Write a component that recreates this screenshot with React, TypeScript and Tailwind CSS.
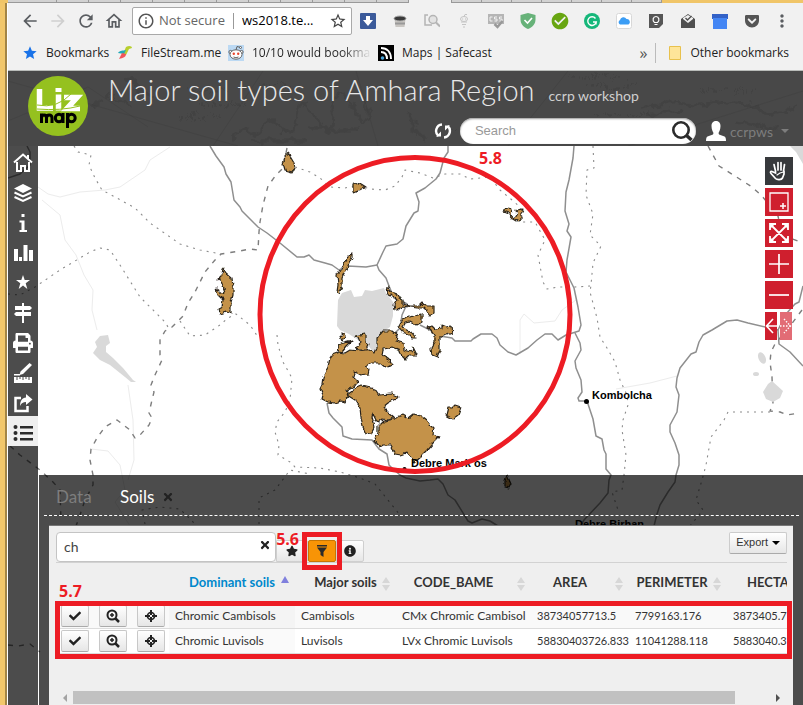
import type { ReactNode } from "react";
import {
  MdArrowBack,
  MdArrowForward,
  MdRefresh,
  MdOutlineHome,
  MdInfoOutline,
  MdStarBorder,
  MdMoreVert,
  MdStar,
  MdCheckCircle,
} from "react-icons/md";
import { FaStar, FaPrint, FaCheck, FaTimes, FaInfoCircle, FaCaretDown, FaReddit, FaGetPocket } from "react-icons/fa";

const ROADS = [
  "M210 146 216 156 224 167 226 174 231 182 234 200 240 207 242 211 258 227 267 233 280 243 297 257 304 257 309 255 314 260 325 263 332 265 339 270 348 266 366 267 377 265",
  "M448 146 448 152 444 158 440 173 436 179 425 188 416 193 419 202 418 211 414 213 406 226 403 239 397 244 386 246 383 252 377 265 379 270 386 278 389 286 394 298 402 301 407 304 402 315 400 328 394 334",
  "M420 325 430 330 440 336 452 338 455 341 471 341 473 339 481 334 492 334 497 338 500 345 508 352 516 355 528 348 537 340 545 334 552 334 558 340 566 335 579 331 581 325 578 307 574 288 566 272 567 260 571 237 567 231 569 224 565 211 566 192 569 180 573 158 574 146",
  "M575 333 580 343 581 350 575 361 576 368 581 380 582 392 578 398 579 401 587 401 593 419 596 436 602 439 604 450 606 454 606 469 611 475 609 480 608 493 600 503 584 520 578 530",
  "M803 286 799 302 795 304 786 314 778 330 748 323 737 320 727 321 712 330 703 335 699 342 696 352 691 354 680 368 677 378 676 387 679 395 677 412 670 425 670 432 675 443 679 455 679 465 676 475 675 482 668 492 660 505 657 514 654 526",
  "M778 330 779 344 790 352 803 366",
  "M327 403 329 413 333 418 342 427 343 436 352 439 372 440 379 449 387 454 389 465 393 469 400 475 406 478 420 481 430 480 438 479 443 484 448 495 455 500 468 521 472 523 482 519 490 521 498 526",
  "M8 178 20 174 30 165 30 152 27 146",
];

const DASHED = [
  "M287 148 283 168 276 175 268 186 263 205 260 222 259 232 258 250 250 249 240 251 221 254 215 260 205 272 200 282 195 292 188 303 183 316 172 327 165 331 160 340 160 355 162 360 155 375 151 385 154 392 152 400 149 413 152 418 149 425 140 435 135 438 130 430 117 420 105 427 97 438 91 449 90 460 93 475 93 485 85 500 80 515 76 526",
  "M708 146 719 166 735 176 752 187 762 196 778 216 782 235 803 243",
  "M802 310 790 326 775 344 771 352 770 362 772 377 773 404 770 411 780 412 787 415 799 413",
  "M10 446 20 455 40 470 53 482 60 490 61 520",
  "M8 645 18 646 30 644 40 652",
];

const DOTTED = [
  "M74 146 78 152 91 155 89 165 95 178 102 190 115 197 135 208 150 223 180 244 200 250 221 254",
  "M8 294 20 295 35 287 60 270 90 252 100 248 110 250 120 265 140 297 165 322 168 327",
  "M180 321 190 336 205 335 220 325 228 318 236 314 250 325 258 337",
  "M277 335 278 345 283 362 292 378 290 400 285 412 277 422 275 432 279 445 278 455 290 462 295 467 320 468 340 472 360 478 375 484 400 515",
  "M295 167 310 172 320 178 330 187 345 188 358 185 370 189 385 190 395 186 402 177 405 170 420 173 433 178 445 174 460 174 470 179 490 177 500 190 512 200 520 207 523 222 535 222 545 240 538 255 543 282 547 289 558 287 575 287 590 286",
  "M593 146 594 168 587 170 586 195 593 214 590 235 601 246 593 263 591 285 590 292 597 318 600 337 607 348 615 362 620 380 627 395 628 405 623 420 622 430 626 455 624 475 622 490 612 492 618 510",
  "M770 412 728 412 724 420 711 437 706 465 702 480 696 500 703 510 690 526",
  "M145 524 142 510 160 507 180 509 195 524",
  "M259 524 259 498 275 490 290 470 310 474",
];

const FAINT = [
  "M38 187 48 194 60 197 80 192 105 190 120 187 145 170 150 160 170 147",
  "M91 449 108 451 120 465 125 490 115 502 130 526",
  "M42 200 60 215 65 240 76 255 84 275 93 290 92 310 97 330",
  "M520 354 520 320 524 314 534 323 555 321 562 310 576 300",
  "M616 389 650 383 677 376",
  "M128 385 133 420 134 460 128 480",
];

const WATER = [
  "M338 300 342 293 351 290 354 297 362 296 365 290 372 291 384 288 386 293 393 302 393 316 390 327 384 331 378 345 374 353 367 344 355 338 349 334 340 330 337 326z",
  "M95 342 100 336 108 335 110 343 106 346 106 352 113 358 123 368 133 380 136 382 131 382 125 377 110 365 100 360 93 353 97 347z",
  "M763 392 768 384 772 381 783 391 780 398 773 402 766 399z",
  "M790 146 803 146 803 164 796 152z",
];

const SOILS = [
  "M289 153 291 158 294 163 295 167 292 173 285 171 283 164 285 158z",
  "M353 185 357 183 365 188 358 190 353 192z",
  "M503 211 508 208 512 209 511 215 515 218 517 215 516 210 523 209 521 213 521 219 517 221 512 218 508 213z",
  "M352 253 352 257 347 268 342 277 342 287 339 293 337 292 338 285 337 275 342 267 348 257z",
  "M223 268 226 273 232 278 233 287 233 295 231 302 231 313 226 312 220 314 218 309 222 307 223 300 218 295 216 289 222 293 225 292 221 281 218 279 222 275z",
  "M388 287 391 291 396 293 399 298 403 300 403 304 410 306 420 306 423 303 427 306 434 306 434 313 430 315 427 311 424 308 417 308 402 306 398 310 395 310 394 305 397 300 392 295 390 297 387 293z",
  "M422 313 422 322 417 325 410 321 405 322 403 328 412 333 416 338 412 338 408 334 402 332 398 327 402 320 410 317 418 314z",
  "M427 327 432 326 435 329 442 328 442 325 447 327 451 326 452 333 447 335 440 337 440 350 437 357 432 355 431 349 435 342 435 337 432 332z",
  "M332 355 340 352 345 353 350 350 360 351 367 349 375 353 377 348 377 338 383 331 392 331 397 335 396 341 403 343 404 350 412 352 413 347 417 355 410 355 405 360 402 357 400 350 393 347 383 349 382 355 387 358 393 364 386 368 380 363 372 363 365 367 369 369 368 374 360 375 354 372 353 377 358 382 355 386 347 390 349 395 345 402 340 401 334 403 328 402 322 399 323 395 320 388 322 384 323 377 328 367 330 358z",
  "M340 336 343 333 346 337 342 341z",
  "M337 350 340 344 352 341 347 346 342 352z",
  "M355 336 365 334 365 342 369 345 367 350 358 350 356 348 360 343 358 338z",
  "M347 395 355 389 362 386 375 389 379 395 392 394 399 397 388 403 383 407 388 412 394 417 388 420 383 419 378 423 373 413 372 417 375 427 372 433 366 434 363 427 361 417 360 408 355 400z",
  "M384 421 390 420 397 417 403 415 408 418 413 414 422 416 427 420 430 424 434 428 433 435 439 437 433 443 427 450 420 457 414 462 407 453 401 455 395 454 390 445 383 445 380 447 374 440 378 433 378 427z",
  "M448 407 453 407 455 405 461 407 458 415 453 419 446 415z",
  "M507 475 511 484 509 488 505 487 505 481z",
];

function SoilMap() {
  return (
    <svg
      className="absolute inset-0 h-full w-full"
      viewBox="8 146 795 559"
      preserveAspectRatio="xMinYMin slice"
      fill="none"
      strokeLinejoin="round"
      aria-label="Soil map"
    >
      <filter id="shoreline" filterUnits="userSpaceOnUse" x="8" y="146" width="795" height="559">
        <feTurbulence type="fractalNoise" baseFrequency="0.18" numOctaves="2" seed="4" />
        <feDisplacementMap in="SourceGraphic" scale="5" xChannelSelector="R" yChannelSelector="G" />
      </filter>
      <g stroke="#ececec" strokeWidth="1">{FAINT.map((d) => <path key={d} d={d} />)}</g>
      <g stroke="#8f8f8f" strokeWidth="1.5">{ROADS.map((d) => <path key={d} d={d} />)}</g>
      <g stroke="#7d7d7d" strokeWidth="1.4" strokeDasharray="5 6">{DASHED.map((d) => <path key={d} d={d} />)}</g>
      <g stroke="#8c8c8c" strokeWidth="1.1" strokeDasharray="2 5">{DOTTED.map((d) => <path key={d} d={d} />)}</g>
      <g fill="#d9d9d9">
        {WATER.map((d) => <path key={d} d={d} />)}
        <ellipse cx="762" cy="358" rx="3.5" ry="6" transform="rotate(-25 762 358)" />
        <ellipse cx="756" cy="374" rx="3" ry="2" />
      </g>
      <g fill="#c4924a" stroke="#2a241a" strokeWidth="1.2" filter="url(#shoreline)">{SOILS.map((d) => <path key={d} d={d} />)}</g>
      <g fill="#000">
        <circle cx="586.5" cy="401.5" r="2.5" />
        <circle cx="404.5" cy="469" r="2" />
        <g style={{ fontFamily: "'Liberation Sans', sans-serif", fontWeight: 700 }} fontSize="11">
          <text x="592" y="399">Kombolcha</text>
          <text x="411" y="467">Debre Mark’os</text>
          <text x="575" y="528">Debre Birhan</text>
        </g>
      </g>
    </svg>
  );
}

function MapMarkup() {
  return (
    <svg
      className="pointer-events-none absolute inset-0 h-full w-full"
      viewBox="8 146 795 559"
      preserveAspectRatio="xMinYMin slice"
      aria-hidden="true"
    >
      <ellipse cx="415" cy="314.5" rx="155" ry="157" fill="none" stroke="#ed1c24" strokeWidth="5" />
      <text x="479" y="164" fill="#ed1c24" fontSize="16" style={{ fontFamily: "'Open Sans', sans-serif", fontWeight: 700 }}>
        5.8
      </text>
    </svg>
  );
}

function TabStrip() {
  return (
    <div className="flex h-[3px] bg-[#f0c568]" aria-hidden="true">
      <div className="ml-2 w-12 border-b border-[#999] bg-[#d2d2d2]" />
      {[0, 1, 2, 3, 4, 5, 6, 7, 8, 9, 10].map((n) => (
        <div key={n} className="w-[32px] border-b border-l border-[#999] bg-[#d2d2d2]" />
      ))}
      <div className="w-[44px] border-x border-[#999] bg-[#f1f1f1]" />
      {[0, 1, 2, 3, 4, 5, 6].map((n) => (
        <div key={n} className="w-[30px] border-r border-b border-[#999] bg-[#d2d2d2]" />
      ))}
    </div>
  );
}

const EXTENSIONS: { name: string; icon: ReactNode }[] = [
  {
    name: "Downloader",
    icon: (
      <svg viewBox="0 0 16 16" className="size-4">
        <rect width="16" height="16" rx="1" fill="#3b5a9a" />
        <path d="M6 3h4v4h3l-5 6-5-6h3z" fill="#fff" />
      </svg>
    ),
  },
  {
    name: "Cup",
    icon: (
      <svg viewBox="0 0 16 16" className="size-4">
        <path d="M2.500 6h11l-1 8h-9z" fill="#c9c6c2" />
        <path d="M3 9.500h10v2H3z" fill="#999" />
        <ellipse cx="8" cy="5.500" rx="6" ry="2.500" fill="#3a3a3a" stroke="#aaa" />
      </svg>
    ),
  },
  {
    name: "Page search",
    icon: (
      <svg viewBox="0 0 16 16" className="size-4" fill="none" stroke="#b4b4b4" strokeWidth="1.500">
        <path d="M4 2H1v10h7" />
        <circle cx="9" cy="6.500" r="4" fill="#e3e3e3" />
        <path d="M12 9.500l4 4" strokeWidth="2" />
      </svg>
    ),
  },
  {
    name: "Robot",
    icon: (
      <svg viewBox="0 0 16 16" className="size-4" fill="none" stroke="#c4c4c4">
        <ellipse cx="8" cy="6" rx="3.500" ry="2.500" />
        <path d="M8 3.500l1-2h2M5 9h6M6 11.500h4M7 14h2" />
        <path d="M6.500 6h.6M9 6h.6" stroke="#999" />
      </svg>
    ),
  },
  {
    name: "CSS check",
    icon: (
      <svg viewBox="0 0 16 16" className="size-4">
        <path d="M0 1h16v10H0z" fill="#b5b5b5" />
        <path d="M4.500 4H2v4h2.500M9 4H6.500v2H9v2H6.500M14 4h-2.500v2H14v2h-2.500" stroke="#f1f1f1" fill="none" />
        <path d="M6.500 11l3 3 5-6" stroke="#999" strokeWidth="2.500" fill="none" />
      </svg>
    ),
  },
  {
    name: "Ad shield",
    icon: (
      <svg viewBox="0 0 16 16" className="size-4">
        <path d="M8 0l7.500 2v4.500c0 4-2.500 7.500-7.500 9.500C3 14 .5 10.500.5 6.500V2z" fill="#67b279" />
        <path d="M4.500 7l3 3 4.500-5" stroke="#fff" strokeWidth="1.600" fill="none" />
      </svg>
    ),
  },
  { name: "Verified", icon: <MdCheckCircle className="size-5 text-[#68a611]" /> },
  {
    name: "Grammar",
    icon: (
      <svg viewBox="0 0 16 16" className="size-4">
        <circle cx="8" cy="8" r="8" fill="#15b77a" />
        <path d="M11.500 5.500A4.300 4.300 0 1 0 12.300 9H9M12 11.500V9" stroke="#fff" strokeWidth="1.400" fill="none" />
      </svg>
    ),
  },
  {
    name: "Cloud",
    icon: (
      <svg viewBox="0 0 16 16" className="size-4">
        <rect x=".5" y=".5" width="15" height="15" rx="2" fill="#fff" stroke="#d8d8d8" />
        <path d="M4 11.500a2.500 2.500 0 0 1 0-4.500 3.500 3.500 0 0 1 6.500-1 3 3 0 0 1 2 5.500z" fill="#3b9df5" />
      </svg>
    ),
  },
  {
    name: "Ideas",
    icon: (
      <svg viewBox="0 0 16 16" className="size-4">
        <path d="M1 1h14v10l-4 4H1z" fill="#565656" />
        <path d="M6.500 9.500C4 7.500 5 3.500 8 3.500s4 4 1.500 6zM6.500 11.500h3" stroke="#fff" strokeWidth="1.200" fill="none" />
      </svg>
    ),
  },
  {
    name: "Mail",
    icon: (
      <svg viewBox="0 0 16 16" className="size-4">
        <path d="M1 6l7-5 7 5v9H1z" fill="#505050" />
        <path d="M3 6l5 4 5-4V5L8 2 3 5z" fill="#f1f1f1" />
        <path d="M5.500 5l2 2 4-4" stroke="#505050" strokeWidth="1.400" fill="none" />
      </svg>
    ),
  },
  {
    name: "Window",
    icon: (
      <svg viewBox="0 0 16 16" className="size-4">
        <path d="M0 1h16v5H0z" fill="#3462c7" />
        <path d="M1 5h14v11H1z" fill="#4486f4" />
      </svg>
    ),
  },
  { name: "Pocket", icon: <FaGetPocket className="size-4 text-[#555]" /> },
];

function BrowserBar() {
  const nav = "flex size-7 items-center justify-center text-[#5a5d61]";
  return (
    <div className="flex h-9 items-center pr-[7px] pl-2">
      <button className={nav} aria-label="Back"><MdArrowBack className="size-5" /></button>
      <button className="flex size-7 items-center justify-center text-[#cfcfcf]" aria-label="Forward"><MdArrowForward className="size-5" /></button>
      <button className={nav} aria-label="Reload"><MdRefresh className="size-5" /></button>
      <button className={nav} aria-label="Home"><MdOutlineHome className="size-5" /></button>
      <div className="ml-1 flex h-7 min-w-0 flex-1 items-center rounded-xs border border-[#a9a9a9] bg-white px-1">
        <MdInfoOutline className="mr-1 size-[18px] shrink-0 text-[#555]" />
        <span className="shrink-0 text-[13px] text-[#666]">Not secure</span>
        <span className="mx-2 h-4 w-px shrink-0 bg-[#999]" />
        <input
          aria-label="Address"
          className="w-0 min-w-0 flex-1 bg-transparent text-[13px] text-black outline-none"
          defaultValue="ws2018.te..."
        />
        <button aria-label="Bookmark this page"><MdStarBorder className="size-[18px] text-[#444]" /></button>
      </div>
      {EXTENSIONS.map((e) => (
        <button key={e.name} aria-label={e.name} className="flex h-7 w-8 shrink-0 items-center justify-center">{e.icon}</button>
      ))}
      <button className={nav} aria-label="Menu"><MdMoreVert className="size-5" /></button>
    </div>
  );
}

function BookmarksBar() {
  return (
    <nav aria-label="Bookmarks" className="flex h-8 items-start border-b border-[#b9bcb9] pr-[14px] pl-[14px] pt-1 text-[12px] leading-[20px] text-[#222]">
      <a href="#bookmarks" className="flex w-[95px] shrink-0 items-center gap-2">
        <MdStar className="size-4 text-[#1a73e8]" />Bookmarks
      </a>
      <a href="#filestream" className="flex w-[111px] shrink-0 items-center gap-2">
        <svg viewBox="0 0 16 16" className="size-4">
          <path d="M9 2c3-2 6-1 6 1l-3 1-3 6-3-1z" fill="#b8cf2e" />
          <path d="M1 8c2-3 5-2 8-3L7 9z" fill="#21a9b8" />
          <path d="M2 14l3-6 4 1c0 3-3 4-7 5z" fill="#f2545b" />
        </svg>
        FileStream.me
      </a>
      <a href="#reddit" className="flex w-[150px] shrink-0 items-center gap-2">
        <svg viewBox="0 0 16 16" className="size-4 shrink-0">
          <rect width="16" height="16" fill="#bcd9f3" />
          <g fill="#fff" stroke="#555" strokeWidth=".9">
            <path d="M8 5l1-3.500 3 .8" fill="none" />
            <circle cx="12.500" cy="2.500" r="1" />
            <circle cx="2.500" cy="7" r="1.600" />
            <circle cx="13.500" cy="7" r="1.600" />
            <ellipse cx="8" cy="9.500" rx="6" ry="4.700" />
          </g>
          <path d="M5.500 12q2.500 1.500 5 0" stroke="#555" strokeWidth=".9" fill="none" />
          <circle cx="5.800" cy="8.800" r="1.200" fill="#e8452c" />
          <circle cx="10.200" cy="8.800" r="1.200" fill="#e8452c" />
        </svg>
        <span className="bg-linear-to-r from-[#222] from-75% to-[#e4e4e4] bg-clip-text whitespace-nowrap text-transparent">10/10 would bookma</span>
      </a>
      <a href="#safecast" className="flex shrink-0 items-center gap-2">
        <svg viewBox="0 0 16 16" className="size-4">
          <rect width="16" height="16" />
          <path d="M3 3c6 0 10 4 10 11M3 7c4 0 6 3 6 7" stroke="#fff" strokeWidth="2" fill="none" />
          <circle cx="4.500" cy="13" r="1.800" fill="#4aa6dc" />
        </svg>
        Maps | Safecast
      </a>
      <button aria-label="More bookmarks" className="mr-2 ml-auto text-[16px] text-[#555]">»</button>
      <span className="mr-3 h-5 w-px bg-[#bbb]" />
      <a href="#other" className="flex items-center gap-2">
        <svg viewBox="0 0 14 14" className="size-[14px]"><path d="M1.500.5h11v13h-11z" fill="#fee599" stroke="#e8c14d" /></svg>
        Other bookmarks
      </a>
    </nav>
  );
}

function Logo() {
  return (
    <svg viewBox="0 0 60 60" className="size-[60px] shrink-0" role="img" aria-label="Lizmap">
      <circle cx="30" cy="30" r="30" fill="#95c11f" />
      <g fill="none" stroke="#fff" strokeWidth="5.500">
        <path d="M11.500 13v19H25M30.500 18.500v16M36 21.500h13L39 32.500h13" />
      </g>
      <rect x="27.500" y="12" width="6" height="4" fill="#fff" />
      <path d="M9 29q20 4 34-11M9 33q24 2 43-3" stroke="#95c11f" strokeWidth="1" fill="none" />
      <g fill="none" stroke="#000" strokeWidth="3">
        <path d="M13.500 47v-9.500M13.500 42c0-4 5-4 5 0v5M18.500 42c0-4 5.500-4 5.500 0v5" />
        <circle cx="31" cy="42" r="3.700" />
        <path d="M35 37v10M39.500 37v15" />
        <circle cx="43.500" cy="42" r="3.700" />
      </g>
    </svg>
  );
}

function HeaderTexture() {
  return (
    <svg className="absolute inset-0 h-full w-full" viewBox="0 0 795 75" preserveAspectRatio="xMinYMin slice" fill="none" stroke="#3c3c3c" aria-hidden="true">
      <filter id="engraving" filterUnits="userSpaceOnUse" x="0" y="0" width="795" height="75">
        <feTurbulence type="fractalNoise" baseFrequency="0.09" numOctaves="3" seed="9" />
        <feDisplacementMap in="SourceGraphic" scale="14" xChannelSelector="R" yChannelSelector="G" />
      </filter>
      <path d="M0 50l80-34 60 40M205 75l50-75M348 0l22 75M560 0l-60 75M0 10l230 65M620 75L795 20" strokeOpacity=".35" />
      <g filter="url(#engraving)" strokeOpacity=".45">
        <path d="M225 66q8-10 16-4t14-8 18 2 16-10 20 2 16-8 20-4 12-8M240 70h60M300 58h50" strokeWidth="3" />
        <path d="M635 38q20-10 36-6t40 0 38 6 40-2M640 48q12-12 34-8M100 22l22 14M120 8l24 20M96 30l-14 4M400 40l10 20 8 10M730 50l40 8" strokeWidth="3" />
        <path d="M180 20h40M190 34h50M170 46h42M440 62h30M560 6h60M580 16h50M585 44h60M250 14h36M500 20h26M690 20h60" strokeWidth="3" strokeDasharray="1 2 3 3 1 2" />
      </g>
    </svg>
  );
}

function AppHeader() {
  return (
    <header className="relative h-[75px] overflow-hidden bg-[#484848] font-['Lato',sans-serif] text-[#e8e8e8]">
      <HeaderTexture />
      <div className="relative flex pt-[5px] pr-[14px] pl-5">
        <Logo />
        <div className="ml-5 flex-1">
          <h1 className="flex items-baseline gap-[14px] text-[29px] leading-[28px] font-light whitespace-nowrap">
            Major soil types of Amhara Region
            <small className="text-[14px] font-normal text-[#cfcfcf]">ccrp workshop</small>
          </h1>
          <div className="mt-2 flex items-center justify-end">
            <button aria-label="Refresh" className="mr-2">
              <svg viewBox="0 0 18 18" className="size-[18px]" fill="none" stroke="#fff" strokeWidth="2.400">
                <path d="M8 2.500A6.500 6.500 0 0 0 4.500 14M10 15.500A6.500 6.500 0 0 0 13.500 4" />
                <path d="M2 14.500h5v-5zM16 3.500h-5v5z" fill="#fff" stroke="none" />
              </svg>
            </button>
            <label className="flex h-[26px] w-[236px] items-center rounded-full bg-white pr-[3px] pl-[15px] shadow-[inset_0_1px_2px_#999]">
              <input aria-label="Search" placeholder="Search" className="min-w-0 flex-1 bg-transparent font-['Liberation_Sans',sans-serif] text-[13px] outline-none placeholder:text-[#999]" />
              <svg viewBox="0 0 22 22" className="size-[22px]" fill="none" stroke="#2b2b2b">
                <circle cx="10" cy="10" r="7.700" strokeWidth="2.600" />
                <path d="M15 15l5.500 5" strokeWidth="3.400" />
              </svg>
            </label>
            <button className="ml-[10px] flex items-center gap-1 text-[14px] text-[#7d7d7d]">
              <svg viewBox="0 0 20 20" className="size-5" fill="#fff">
                <path d="M5.500 5C5.500 1.500 7.500 0 10 0s4.500 1.500 4.500 5-1.500 6-2 7l.5 1.500 5.500 2c1 .5 1.500 2 1.500 4.500H0c0-2.500.5-4 1.500-4.500l5.500-2 .5-1.500c-.5-1-2-3.500-2-7z" />
              </svg>
              ccrpws
              <svg viewBox="0 0 8 4" className="ml-1 h-1 w-2" fill="currentColor"><path d="M0 0h8L4 4z" /></svg>
            </button>
          </div>
        </div>
      </div>
    </header>
  );
}

const SIDE_ITEMS: { name: string; icon: ReactNode }[] = [
  { name: "Home", icon: <path d="M1 9.500 10 1.500l9 8M15 2v4M4 9v9h4v-5h4v5h4V9" stroke="currentColor" strokeWidth="2" fill="none" /> },
  {
    name: "Layers",
    icon: (
      <g>
        <path d="M10 1l9 4.500-9 4.500-9-4.500z" fill="currentColor" />
        <path d="M1.500 9.500l8.500 4 8.500-4M1.500 14l8.500 4 8.500-4" fill="none" stroke="currentColor" strokeWidth="2" />
      </g>
    ),
  },
  { name: "Information", icon: <path d="M8.500 1h3v3h-3zM6.500 7.500h5V17h2.500v2H6.500v-2h2V9.500h-2z" fill="currentColor" /> },
  { name: "Charts", icon: <path d="M1 6h4v12H1zM6 14h3v4H6zM10.500 2h4v16h-4zM16 7h4v11h-4z" fill="currentColor" /> },
  { name: "Bookmarks", icon: <path d="M10 2l1.700 5H17l-4.300 3.200L14.300 16 10 12.600 5.700 16l1.600-5.800L3 7h5.300z" fill="currentColor" /> },
  { name: "Directions", icon: <path d="M9 0h2v3h6l2 2-2 2h-6v2h7v4h-7v7H9v-7H3l-2-2 2-2h6V7H2V3h7z" fill="currentColor" /> },
  { name: "Print", icon: null },
  {
    name: "Measure",
    icon: (
      <g fill="currentColor">
        <path d="M16.500 0l2.500 2-9 9-3.500 1 1-3.500zM1 11h6v1.500H1zM1 14h18v6H1z" />
        <path d="M4 14v3M7 14v2M10 14v3M13 14v2M16 14v3" stroke="#4a4a4a" />
      </g>
    ),
  },
  {
    name: "Share",
    icon: (
      <g>
        <path d="M8 5H2.500v13h12v-5" fill="none" stroke="currentColor" strokeWidth="2.500" />
        <path d="M13 1l6.500 5.500L13 12V9c-3 0-4.500 1-6 4 0-5 2-8 6-8.500z" fill="currentColor" />
      </g>
    ),
  },
];

function SideMenu() {
  return (
    <nav aria-label="Map menu" className="w-[30px] shrink-0 bg-black/70 text-white">
      {SIDE_ITEMS.map((item) => (
        <button key={item.name} aria-label={item.name} className="flex h-[30px] w-full items-center justify-center pt-1">
          {item.icon ? <svg viewBox="0 0 20 20" className="size-5">{item.icon}</svg> : <FaPrint className="size-5" />}
        </button>
      ))}
      <button aria-label="Attribute table" className="flex h-[30px] w-full items-center justify-center bg-[#efefef] pt-1 text-[#2b2b2b]">
        <svg viewBox="0 0 20 20" className="size-5" fill="currentColor">
          <circle cx="2.500" cy="4" r="2" /><circle cx="2.500" cy="10" r="2" /><circle cx="2.500" cy="16" r="2" />
          <path d="M7 3h13v2.500H7zM7 9h13v2.500H7zM7 15h13v2.500H7z" />
        </svg>
      </button>
    </nav>
  );
}

function MapTools() {
  const tool = "flex size-7 items-center justify-center bg-[#cf1f2e]";
  return (
    <div className="mt-[11px] mr-[10px] flex flex-col gap-[3px] self-end">
      <button aria-label="Pan" className="flex size-7 items-center justify-center bg-[#37393c]">
        <svg viewBox="0 0 20 20" className="size-5" fill="none" stroke="#fff" strokeWidth="1.700" strokeLinecap="round">
          <path d="M6.500 10L5 3.500M9 9V1.500M12 9V1.500M14.500 10l1-6.500M6.500 10v2L3 10.500c-1.500-.5-2 1-1 2l4.500 5c1.500 1.500 6 1.500 7-.5l1.500-4v-3" />
          <path d="M8 14l3-2 3.500-1" strokeWidth="1.200" />
        </svg>
      </button>
      <button aria-label="Zoom to rectangle" className={tool}>
        <svg viewBox="0 0 20 20" className="size-5" fill="none" stroke="#fff"><path d="M1 1h18v18H1z" strokeWidth="1.300" /><path d="M14 11v6M11 14h6" strokeWidth="1.500" /></svg>
      </button>
      <button aria-label="Full extent" className={tool}>
        <svg viewBox="0 0 20 20" className="size-5" fill="none" stroke="#fff" strokeWidth="1.800">
          <path d="M1 7V1h6M13 1h6v6M19 13v6h-6M7 19H1v-6M2 2l16 16M18 2L2 18" />
          <path d="M1 1h5L1 6zM19 1v5l-5-5zM19 19h-5l5-5zM1 19v-5l5 5z" fill="#fff" stroke="none" />
        </svg>
      </button>
      <button aria-label="Zoom in" className={tool}>
        <svg viewBox="0 0 20 20" className="size-5" stroke="#fff" strokeWidth="1.700"><path d="M0 10h20M10 0v20" /></svg>
      </button>
      <button aria-label="Zoom out" className={tool}>
        <svg viewBox="0 0 20 20" className="size-5" stroke="#fff" strokeWidth="1.700"><path d="M0 10h20" /></svg>
      </button>
      <div className="flex h-7 gap-[3px]">
        <button aria-label="Previous view" className="flex w-3 items-center justify-center bg-[#cf1f2e]">
          <svg viewBox="0 0 12 20" className="h-5 w-3" fill="none" stroke="#fff" strokeWidth="1.600"><path d="M12 10H2M8 3L1.500 10 8 17" /></svg>
        </button>
        <button aria-label="Next view" className="flex w-3 items-center justify-center bg-[#e26c75]">
          <svg viewBox="0 0 12 20" className="h-5 w-3" fill="none" stroke="#fff" strokeWidth="1.400" strokeDasharray="1.500 1.500"><path d="M0 10h10M4 3l6.500 7L4 17" /></svg>
        </button>
      </div>
    </div>
  );
}

function SortMark({ active }: { active?: boolean }) {
  return active ? (
    <svg viewBox="0 0 8 14" className="absolute top-3 right-[6px] h-[14px] w-2"><path d="M0 8l4-7 4 7z" fill="#8080dd" /></svg>
  ) : (
    <svg viewBox="0 0 8 14" className="absolute top-[14px] right-[6px] h-[14px] w-2"><path d="M0 6l4-6 4 6zM0 8l4 6 4-6z" fill="#d7d7d7" /></svg>
  );
}

const ROWS = [
  ["Chromic Cambisols", "Cambisols", "CMx Chromic Cambisol", "38734057713.5", "7799163.176", "3873405.77"],
  ["Chromic Luvisols", "Luvisols", "LVx Chromic Luvisols", "58830403726.833", "11041288.118", "5883040.37"],
];

const rowButton =
  "mx-auto flex h-[22px] w-7 items-center justify-center rounded-xs border border-[#c8c8c8] border-b-[#aaa] bg-linear-to-b from-white to-[#e6e6e6] text-[#222]";

function SoilTable() {
  return (
    <div className="relative">
      <div className="overflow-hidden">
        <table className="w-[771px] table-fixed border-collapse font-['Lato',sans-serif] text-[#333]">
          <colgroup>
            <col className="w-[38px]" /><col className="w-[38px]" /><col className="w-[37px]" />
            <col className="w-[126px]" /><col className="w-[101px]" /><col className="w-[135px]" />
            <col className="w-[98px]" /><col className="w-[98px]" /><col className="w-[100px]" />
          </colgroup>
          <thead>
            <tr className="h-[41px] text-[13px] whitespace-nowrap">
              <td /><td /><td />
              <th className="relative">
                <span className="text-[#0088cc]">Dominant soils</span><SortMark active />
              </th>
              <th className="relative">Major soils<SortMark /></th>
              <th className="relative pr-5">CODE_BAME<SortMark /></th>
              <th className="relative pr-5">AREA<SortMark /></th>
              <th className="relative pr-3">PERIMETER<SortMark /></th>
              <th className="pl-5 text-left">HECTA</th>
            </tr>
          </thead>
          <tbody>
            {ROWS.map((row) => (
              <tr key={row[0]} className="h-[25px] border-b border-[#dcdcdc] bg-white text-[12px] leading-[20px] whitespace-nowrap odd:bg-[#f9f9f9]">
                <td><button aria-label={"Select " + row[0]} className={rowButton}><FaCheck className="size-3" /></button></td>
                <td>
                  <button aria-label={"Zoom to " + row[0]} className={rowButton}>
                    <svg viewBox="0 0 14 14" className="size-[14px]" fill="none" stroke="currentColor"><circle cx="6" cy="6" r="4.500" strokeWidth="2" /><path d="M6 4v4M4 6h4" strokeWidth="1.500" /><path d="M9.500 9.500l3.500 3.500" strokeWidth="2.500" /></svg>
                  </button>
                </td>
                <td>
                  <button aria-label={"Centre on " + row[0]} className={rowButton}>
                    <svg viewBox="0 0 14 14" className="size-[14px]" fill="none" stroke="currentColor"><circle cx="7" cy="7" r="3.500" strokeWidth="1.700" /><path d="M7 1v5M7 8v5M1 7h5M8 7h5" strokeWidth="2" /></svg>
                  </button>
                </td>
                {row.map((cell, c) => (
                  <td key={c} className={c === 0 ? "bg-black/2 pl-[6px]" : c > 2 ? "pl-[6px] text-[11px]" : "pl-[6px]"}>{cell}</td>
                ))}
              </tr>
            ))}
          </tbody>
        </table>
      </div>
      <div className="pointer-events-none absolute top-[38px] -right-[5px] -left-px h-[58px] border-[5px] border-[#ed1c24]" />
      <span className="absolute top-[17px] left-[3px] font-['Open_Sans',sans-serif] text-[16px] leading-[22px] font-bold text-[#ed1c24]">5.7</span>
    </div>
  );
}

const toolButton =
  "flex h-[22px] items-center justify-center rounded-r-xs border border-[#cfcfcf] bg-linear-to-b from-white to-[#e6e6e6] text-[#222]";

function AttributeDock() {
  return (
    <section className="ml-px bg-black/70">
      <div role="tablist" className="mr-1 ml-[5px] flex h-[41px] items-center gap-6 border-b border-dashed border-white pt-1 pl-3 font-['Lato',sans-serif] text-[17px]">
        <button role="tab" aria-selected="false" className="w-10 text-left text-[#7d7d7d]">Data</button>
        <div className="flex items-center gap-2">
          <button role="tab" aria-selected="true" className="text-white">Soils</button>
          <button aria-label="Close Soils"><FaTimes className="size-3 text-[#222]" /></button>
        </div>
      </div>
      <div className="mt-[10px] mr-[10px] ml-[10px] bg-[#efefef] pt-[6px] pr-[6px] pl-[7px] shadow-[0_-1px_0_#777]">
        <div className="relative flex items-end border-b border-[#d2d2d2]">
          <div className="flex h-[30px] w-[220px] rounded-sm border border-[#c4c4c4] bg-white pr-1 pl-[7px]">
            <input aria-label="Filter soils" defaultValue="ch" className="min-w-0 flex-1 font-['Lato',sans-serif] text-[14px] text-[#444] outline-none" />
            <button aria-label="Clear filter" className="self-start pt-[6px]"><FaTimes className="size-3 text-[#222]" /></button>
          </div>
          <button aria-label="Selected features" className={toolButton + " w-8"}><FaStar className="size-3" /></button>
          <div className="relative">
            <button aria-label="Filter" aria-pressed="true" className="flex h-[22px] w-7 items-center justify-center rounded-xs border border-[#c67605] bg-[#f89406]">
              <svg viewBox="0 0 12 12" className="size-3" fill="#2b2b2b"><path d="M1 0h10v1.500H1zM1 2.500h10L7.500 7v5l-3-2V7z" /></svg>
            </button>
            <div className="pointer-events-none absolute -inset-x-[6px] -top-[8px] -bottom-[8px] border-[5px] border-[#ed1c24]" />
            <span className="absolute -top-3 right-[37px] font-['Open_Sans',sans-serif] text-[16px] leading-[22px] font-bold text-[#ed1c24]">5.6</span>
          </div>
          <button aria-label="Information" className={toolButton + " w-7"}><FaInfoCircle className="size-3" /></button>
          <button className="ml-auto flex h-[22px] items-center gap-1 self-start rounded-xs border border-[#ccc] border-b-[#aaa] bg-linear-to-b from-white to-[#e6e6e6] px-[6px] font-['Liberation_Sans',sans-serif] text-[11px] text-[#333]">
            Export
            <svg viewBox="0 0 8 4" className="h-1 w-2"><path d="M0 0h8L4 4z" /></svg>
          </button>
        </div>
        <SoilTable />
        <div className="mt-9 flex h-[15px] items-center gap-[6px] px-[7px]">
          <svg viewBox="0 0 4 8" className="h-2 w-1 shrink-0"><path d="M4 0v8L0 4z" fill="#a3a3a3" /></svg>
          <div className="h-[13px] flex-1"><div className="h-full w-[95%] bg-[#c1c1c1]" /></div>
          <svg viewBox="0 0 4 8" className="h-2 w-1 shrink-0"><path d="M0 0v8l4-4z" fill="#505050" /></svg>
        </div>
      </div>
    </section>
  );
}

export default function App() {
  return (
    <div className="flex min-h-screen flex-col bg-[#f1f1f1] font-['Open_Sans',sans-serif]">
      <TabStrip />
      <div className="flex flex-1">
        <div className="w-2 shrink-0 border-r border-white bg-linear-to-r from-[#f2c76b] from-75% to-[#a38546] to-75%" />
        <div className="flex min-w-0 flex-1 flex-col">
          <BrowserBar />
          <BookmarksBar />
          <AppHeader />
          <main className="relative flex flex-1 overflow-hidden bg-white">
            <SoilMap />
            <div className="relative flex min-w-0 flex-1">
              <SideMenu />
              <div className="flex min-w-0 flex-1 flex-col">
                <div className="flex flex-1 flex-col"><MapTools /></div>
                <AttributeDock />
              </div>
            </div>
            <MapMarkup />
          </main>
        </div>
      </div>
    </div>
  );
}
